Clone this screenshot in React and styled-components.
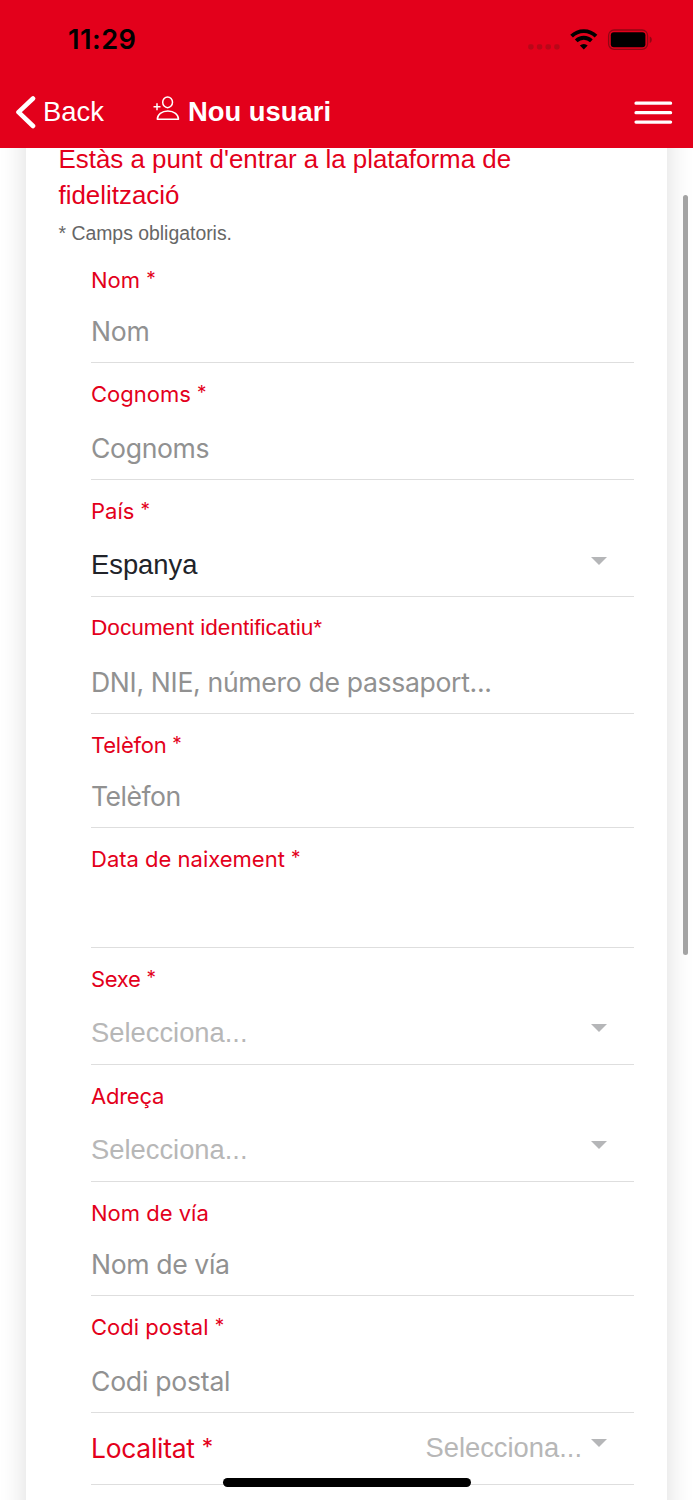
import React from 'react';
import styled, { createGlobalStyle } from 'styled-components';

const RED = '#e3001b';
const ARIAL = "'Liberation Sans', Arial, sans-serif";
const SYSTEM = "Inter, 'Liberation Sans', sans-serif";

const GlobalStyle = createGlobalStyle`
  * {
    box-sizing: border-box;
  }
  body {
    margin: 0;
    background: #fff;
    font-family: ${ARIAL};
  }
`;

const Screen = styled.div`
  position: relative;
  display: flex;
  flex-direction: column;
  width: 693px;
  height: 1500px;
  overflow: hidden;
  background: #fff;
`;

const Header = styled.header`
  position: relative;
  z-index: 1;
  flex: none;
  height: 147.5px;
  background: ${RED};
`;

const StatusBar = styled.div`
  display: flex;
  align-items: center;
  justify-content: space-between;
  height: 78px;
  padding: 1px 41px 0 68px;
`;

const Clock = styled.span`
  color: #000;
  font: 600 27.2px/32px ${SYSTEM};
  letter-spacing: 0.5px;
`;

const Toolbar = styled.div`
  display: flex;
  align-items: center;
  height: 69px;
  padding: 0 20px 0 15px;
  color: #fff;
`;

const BackButton = styled.div`
  display: flex;
  align-items: center;
  gap: 7px;
  width: 138px;
  font-size: 27.4px;
  line-height: 32px;
`;

const ToolbarText = styled.span`
  padding-bottom: 2px;
`;

const PageTitle = styled.h1`
  display: flex;
  align-items: center;
  flex: 1;
  gap: 8px;
  margin: 0;
  font-size: 27.4px;
  line-height: 32px;
  font-weight: 700;
`;

const TitleIcon = styled.svg`
  margin-top: -8px;
`;

const Content = styled.main`
  flex: 1;
  min-height: 0;
  padding: 0 26px;
`;

const Card = styled.section`
  height: 1500px;
  margin-top: -60px;
  padding: 53px 32px 0;
  background: #fff;
  box-shadow: 0 0 26px rgba(0, 0, 0, 0.14);
`;

const Heading = styled.h2`
  margin: 0;
  padding-left: 0.5px;
  color: ${RED};
  font-size: 25.9px;
  line-height: 36px;
  font-weight: 400;
`;

const Hint = styled.p`
  margin: 8px 0 0;
  padding-left: 0.5px;
  color: #666;
  font-size: 19.4px;
  line-height: 24px;
`;

const FieldList = styled.div`
  padding: 4px 1px 0 33px;
`;

const Field = styled.div`
  display: flex;
  flex-direction: ${p => (p.$inline ? 'row' : 'column')};
  justify-content: space-between;
  height: ${p => p.$height}px;
  padding: ${p => (p.$inline ? '19px 0 20px' : '17px 0 15px')};
  border-bottom: 1px solid #dedede;
`;

const Label = styled.label`
  color: ${RED};
  font-family: ${p => (p.$arial ? ARIAL : SYSTEM)};
  font-size: ${p => (p.$large ? 26.4 : p.$arial ? 22.6 : 22)}px;
  line-height: ${p => (p.$large ? 32 : 28)}px;
  letter-spacing: ${p => p.$spacing || 0}px;
`;

const Required = styled.span`
  font-size: 0.86em;
  line-height: 1;
  vertical-align: 0.14em;
`;

const Value = styled.div`
  display: flex;
  align-items: center;
  justify-content: space-between;
  height: 32px;
  padding-right: 27px;
  gap: 9px;
  color: ${p => p.$color};
  font-family: ${p => (p.$arial ? ARIAL : SYSTEM)};
  font-size: ${p => (p.$arial ? 27.35 : 26.6)}px;
  line-height: 32px;
  letter-spacing: ${p => p.$spacing || 0}px;
`;

const Caret = styled.span`
  margin-top: -9px;
  border: 8px solid transparent;
  border-top-color: #b5b6b8;
  border-bottom: 0;
`;

const Scrollbar = styled.div`
  position: absolute;
  z-index: 2;
  top: 195px;
  right: 5px;
  width: 5px;
  height: 760px;
  border-radius: 3px;
  background: #a3a3a3;
`;

const HomeIndicator = styled.div`
  position: absolute;
  left: 223px;
  bottom: 13px;
  width: 248px;
  height: 9px;
  border-radius: 5px;
  background: #000;
`;

const fields = [
  { label: 'Nom', required: true, placeholder: 'Nom', spacing: -0.3, height: 114 },
  { label: 'Cognoms', required: true, placeholder: 'Cognoms', spacing: -0.35, height: 117 },
  { label: 'País', required: true, value: 'Espanya', select: true, height: 117.5 },
  {
    label: 'Document identificatiu*',
    placeholder: 'DNI, NIE, número de passaport...',
    spacing: -0.33,
    arialLabel: true,
    height: 117,
  },
  {
    label: 'Telèfon',
    required: true,
    placeholder: 'Telèfon',
    spacing: -0.5,
    labelSpacing: -0.25,
    height: 114,
  },
  { label: 'Data de naixement', required: true, height: 119.5 },
  {
    label: 'Sexe',
    required: true,
    placeholder: 'Selecciona...',
    labelSpacing: -0.3,
    select: true,
    height: 117,
  },
  {
    label: 'Adreça',
    placeholder: 'Selecciona...',
    labelSpacing: -0.25,
    select: true,
    height: 117,
  },
  { label: 'Nom de vía', placeholder: 'Nom de vía', spacing: -0.38, height: 114 },
  { label: 'Codi postal', required: true, placeholder: 'Codi postal', spacing: -0.25, height: 117 },
  {
    label: 'Localitat',
    required: true,
    placeholder: 'Selecciona...',
    labelSpacing: -0.25,
    select: true,
    inline: true,
    height: 72,
  },
];

function getColor({ value, select }) {
  if (value) return '#212329';
  return select ? '#b7b7b7' : '#919191';
}

function StatusIcons() {
  return (
    <svg width="124" height="22" viewBox="0 0 124 22">
      <g fill="#b80718">
        <rect x="0.2" y="15.2" width="5.4" height="5.2" rx="1.8" />
        <rect x="8.9" y="15.2" width="5.4" height="5.2" rx="1.8" />
        <rect x="17.5" y="15.2" width="5.4" height="5.2" rx="1.8" />
        <rect x="26.2" y="15.2" width="5.4" height="5.2" rx="1.8" />
      </g>
      <g fill="none" stroke="#000" strokeWidth="3.8">
        <path d="M43.6 7.2a17.2 17.2 0 0 1 24.4 0" />
        <path d="M48.2 11.9a10.8 10.8 0 0 1 15.2 0" />
      </g>
      <path d="M55.8 20.6l-3.9-4a5.6 5.6 0 0 1 7.8 0z" />
      <rect x="80.6" y="1" width="39" height="19.4" rx="5.6" fill="none" stroke="#900613" strokeWidth="1.3" />
      <rect x="82.8" y="3.2" width="34.6" height="15" rx="3" />
      <path d="M121.7 7.4c2.8 1.2 2.8 5.4 0 6.6z" fill="#900613" />
    </svg>
  );
}

function FormField({ field }) {
  const { label, required, placeholder, value, select, inline, arialLabel, height } = field;
  return (
    <Field $height={height} $inline={inline}>
      <Label $arial={arialLabel} $large={inline} $spacing={field.labelSpacing}>
        {label}
        {required && (
          <>
            {' '}
            <Required>*</Required>
          </>
        )}
      </Label>
      <Value $arial={select} $color={getColor(field)} $spacing={field.spacing}>
        {value || placeholder}
        {select && <Caret />}
      </Value>
    </Field>
  );
}

export default function App() {
  return (
    <>
      <GlobalStyle />
      <Screen>
        <Header>
          <StatusBar>
            <Clock>11:29</Clock>
            <StatusIcons />
          </StatusBar>
          <Toolbar>
            <BackButton>
              <svg width="21" height="34" viewBox="0 0 21 34">
                <path
                  d="M18 2.5L3.5 16.2 18 30"
                  fill="none"
                  stroke="#fff"
                  strokeWidth="4.6"
                  strokeLinecap="round"
                  strokeLinejoin="round"
                />
              </svg>
              <ToolbarText>Back</ToolbarText>
            </BackButton>
            <PageTitle>
              <TitleIcon width="27" height="26" viewBox="0 0 27 26" fill="none" stroke="#fff" strokeWidth="1.5">
                <ellipse cx="14.6" cy="6.3" rx="4.9" ry="5.4" />
                <path d="M4.3 23.3c0-4.8 4.5-8.3 10.6-8.3s10.6 3.5 10.6 8.3z" strokeLinejoin="round" />
                <path d="M.5 10.8h7M4 7.3v7" />
              </TitleIcon>
              <ToolbarText>Nou usuari</ToolbarText>
            </PageTitle>
            <svg width="39" height="24" viewBox="0 0 39 24">
              <path
                d="M2 2.2h34.6M2 11.7h34.6M2 21.1h34.6"
                fill="none"
                stroke="#fff"
                strokeWidth="3.2"
                strokeLinecap="round"
              />
            </svg>
          </Toolbar>
        </Header>
        <Content>
          <Card>
            <Heading>Estàs a punt d&apos;entrar a la plataforma de fidelització</Heading>
            <Hint>* Camps obligatoris.</Hint>
            <FieldList>
              {fields.map(field => (
                <FormField key={field.label} field={field} />
              ))}
            </FieldList>
          </Card>
        </Content>
        <Scrollbar />
        <HomeIndicator />
      </Screen>
    </>
  );
}
